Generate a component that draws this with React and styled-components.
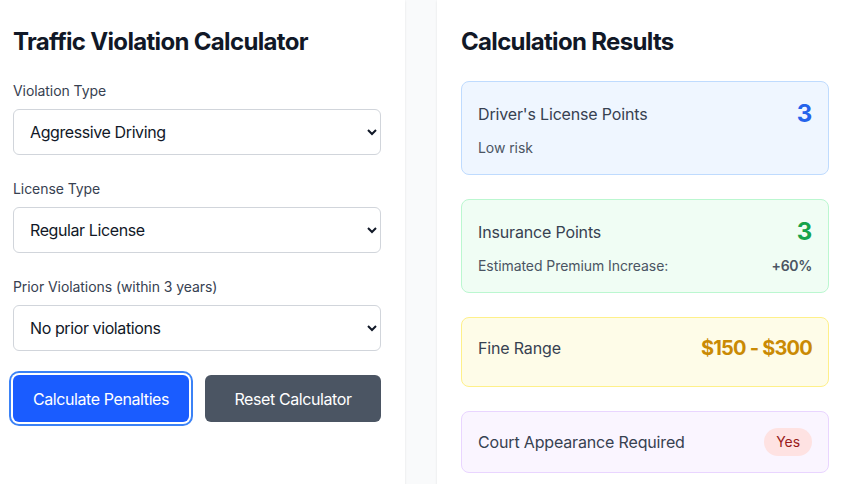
import React from 'react';
import styled, { createGlobalStyle } from 'styled-components';

const GlobalStyle = createGlobalStyle`
  html, body {
    margin: 0;
    padding: 0;
    overflow: hidden;
    background: #f9fafb;
    font-family: Inter, "Noto Sans", sans-serif;
    letter-spacing: -0.02em;
    color: #111827;
  }
  * { box-sizing: border-box; }
`;

function App() {
  return (
    <>
      <GlobalStyle />
      <Page>
        <Card>
          <Title>Traffic Violation Calculator</Title>

          <Field>
            <Label>Violation Type</Label>
            <Select defaultValue="aggressive">
              <option value="speeding">Speeding</option>
              <option value="aggressive">Aggressive Driving</option>
              <option value="reckless">Reckless Driving</option>
            </Select>
          </Field>

          <Field>
            <Label>License Type</Label>
            <Select defaultValue="regular">
              <option value="regular">Regular License</option>
              <option value="commercial">Commercial License</option>
            </Select>
          </Field>

          <Field>
            <Label>Prior Violations (within 3 years)</Label>
            <Select defaultValue="0">
              <option value="0">No prior violations</option>
              <option value="1">1 prior violation</option>
              <option value="2">2 or more prior violations</option>
            </Select>
          </Field>

          <Buttons>
            <Button primary>Calculate Penalties</Button>
            <Button>Reset Calculator</Button>
          </Buttons>
        </Card>

        <Card>
          <Title>Calculation Results</Title>

          <ResultList>
            <ResultBox bg="#eff6ff" border="#bfdbfe">
              <Row>
                <RowLabel>Driver's License Points</RowLabel>
                <BigValue color="#2563eb">3</BigValue>
              </Row>
              <Note>Low risk</Note>
            </ResultBox>

            <ResultBox bg="#f0fdf4" border="#bbf7d0">
              <Row>
                <RowLabel>Insurance Points</RowLabel>
                <BigValue color="#16a34a">3</BigValue>
              </Row>
              <SubRow>
                <SubNote>Estimated Premium Increase:</SubNote>
                <Percent>+60%</Percent>
              </SubRow>
            </ResultBox>

            <ResultBox bg="#fefce8" border="#fef08a" extra>
              <Row>
                <RowLabel>Fine Range</RowLabel>
                <MidValue color="#ca8a04">$150 - $300</MidValue>
              </Row>
            </ResultBox>

            <ResultBox bg="#faf5ff" border="#e9d5ff">
              <Row>
                <RowLabel>Court Appearance Required</RowLabel>
                <Pill>Yes</Pill>
              </Row>
            </ResultBox>
          </ResultList>
        </Card>
      </Page>
    </>
  );
}

export default App;

const Page = styled.div`
  display: grid;
  grid-template-columns: 416px 416px;
  gap: 32px;
  margin-left: -11px;
  width: 864px;
`;

const Card = styled.div`
  background: #fff;
  padding: 24px;
  min-height: 520px;
  box-shadow: 0 1px 3px rgba(0, 0, 0, 0.06), 0 1px 2px rgba(0, 0, 0, 0.04);
`;

const Title = styled.h2`
  margin: 2px 0 23px;
  font-size: 24px;
  line-height: 32px;
  font-weight: 700;
  letter-spacing: -0.028em;
  color: #111827;
`;

const Field = styled.div`
  margin-bottom: 24px;
`;

const Label = styled.label`
  display: block;
  margin-bottom: 8px;
  font-size: 14px;
  line-height: 20px;
  font-weight: 400;
  letter-spacing: -0.005em;
  color: #374151;
`;

const Select = styled.select`
  width: 100%;
  height: 46px;
  padding: 0 12px;
  border: 1px solid #d1d5db;
  border-radius: 6px;
  background: #fff;
  font-family: inherit;
  letter-spacing: -0.025em;
  font-size: 16px;
  color: #111827;
`;

const Buttons = styled.div`
  display: grid;
  grid-template-columns: 1fr 1fr;
  gap: 16px;
`;

const Button = styled.button`
  height: 47px;
  border: none;
  border-radius: 6px;
  font-family: inherit;
  letter-spacing: -0.025em;
  font-size: 16px;
  color: #fff;
  background: ${p => (p.primary ? '#1a5cff' : '#4b5563')};
  box-shadow: ${p => (p.primary ? '0 0 0 2px #fff, 0 0 0 4px #3b82f6' : 'none')};
  cursor: pointer;
`;

const ResultList = styled.div`
  display: flex;
  flex-direction: column;
  gap: 24px;
`;

const ResultBox = styled.div`
  padding: 16px 16px ${p => (p.extra ? '24px' : '16px')};
  background: ${p => p.bg};
  border: 1px solid ${p => p.border};
  border-radius: 8px;
`;

const Row = styled.div`
  display: flex;
  align-items: center;
  justify-content: space-between;
`;

const RowLabel = styled.span`
  font-size: 16px;
  letter-spacing: -0.01em;
  color: #374151;
`;

const BigValue = styled.span`
  font-size: 24px;
  line-height: 32px;
  font-weight: 700;
  color: ${p => p.color};
`;

const MidValue = styled.span`
  font-size: 20px;
  line-height: 28px;
  font-weight: 700;
  letter-spacing: -0.04em;
  color: ${p => p.color};
`;

const SubRow = styled.div`
  display: flex;
  justify-content: space-between;
  align-items: center;
  margin-top: 8px;
`;

const Note = styled.div`
  margin-top: 8px;
  font-size: 14px;
  line-height: 20px;
  letter-spacing: -0.005em;
  color: #4b5563;
`;

const SubNote = styled.span`
  font-size: 14px;
  line-height: 20px;
  letter-spacing: -0.005em;
  color: #4b5563;
`;

const Percent = styled.span`
  font-size: 14px;
  line-height: 20px;
  font-weight: 600;
  color: #4b5563;
`;

const Pill = styled.span`
  padding: 4px 12px;
  border-radius: 9999px;
  background: #fee2e2;
  color: #991b1b;
  font-size: 14px;
  line-height: 20px;
  letter-spacing: -0.005em;
`;
